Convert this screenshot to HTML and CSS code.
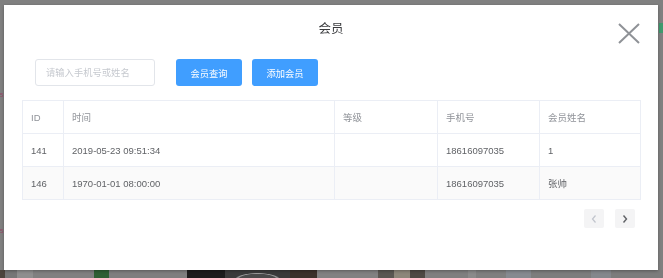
FILE: index.html
```html
<!DOCTYPE html>
<html>
<head>
    <title>会员</title>
    <link rel="stylesheet" href="styles.css">
</head>
<body>
    <div class="page">
        <div class="page-top"></div>
        <div class="page-mid">
            <span class="mark mark-a">5</span>
            <span class="mark mark-b">5</span>
            <span class="tag"></span>
        </div>
        <div class="thumbs">
            <span class="t" style="width:5px;background:#4c443c"></span>
            <span class="t" style="width:12px;background:#767676"></span>
            <span class="t" style="width:16px;background:#8e8e8e"></span>
            <span class="t" style="width:57px;background:#808080"></span>
            <span class="t bottle" style="width:23px"></span>
            <span class="t" style="width:74px;background:#7e7e7e"></span>
            <span class="t" style="width:38px;background:#1c1c1c"></span>
            <span class="t plate" style="width:65px"></span>
            <span class="t" style="width:27px;background:#3b312a"></span>
            <span class="t" style="width:61px;background:#818181"></span>
            <span class="t" style="width:16px;background:#5a5752"></span>
            <span class="t" style="width:16px;background:#8c8679"></span>
            <span class="t" style="width:15px;background:#4d4943"></span>
            <span class="t" style="width:43px;background:#7f7f7f"></span>
            <span class="t" style="width:8px;background:#8a8a8a"></span>
            <span class="t" style="width:30px;background:#7f7f7f"></span>
            <span class="t" style="width:25px;background:#868a90"></span>
            <span class="t" style="width:60px;background:#7d7d7d"></span>
            <span class="t" style="width:20px;background:#84878c"></span>
            <span class="t" style="flex:1;background:#7c7c7c"></span>
        </div>
    </div>

    <div class="dialog">
        <div class="dialog-header">
            <span class="dialog-title">会员</span>
            <button class="dialog-close" aria-label="关闭">
                <svg width="22" height="21" viewBox="0 0 22 21">
                    <path d="M1 1 L21 20 M21 1 L1 20" stroke="#8f9297" stroke-width="2" fill="none"/>
                </svg>
            </button>
        </div>
        <div class="dialog-body">
            <div class="toolbar">
                <input class="search" type="text" placeholder="请输入手机号或姓名">
                <button class="btn btn-search">会员查询</button>
                <button class="btn">添加会员</button>
            </div>
            <table class="members">
                <colgroup>
                    <col style="width:41px">
                    <col style="width:271px">
                    <col style="width:103px">
                    <col style="width:102px">
                    <col>
                </colgroup>
                <thead>
                    <tr>
                        <th>ID</th>
                        <th>时间</th>
                        <th>等级</th>
                        <th>手机号</th>
                        <th>会员姓名</th>
                    </tr>
                </thead>
                <tbody>
                    <tr>
                        <td>141</td>
                        <td>2019-05-23 09:51:34</td>
                        <td></td>
                        <td>18616097035</td>
                        <td>1</td>
                    </tr>
                    <tr class="striped">
                        <td>146</td>
                        <td>1970-01-01 08:00:00</td>
                        <td></td>
                        <td>18616097035</td>
                        <td>张帅</td>
                    </tr>
                </tbody>
            </table>
            <div class="pager">
                <button class="pager-btn disabled" aria-label="上一页">
                    <svg width="6" height="8" viewBox="0 0 6 8"><path d="M4.5 0.5 L1.5 4 L4.5 7.5" stroke="#c0c4cc" stroke-width="1.2" fill="none"/></svg>
                </button>
                <button class="pager-btn" aria-label="下一页">
                    <svg width="6" height="8" viewBox="0 0 6 8"><path d="M1.5 0.5 L4.5 4 L1.5 7.5" stroke="#606266" stroke-width="1.4" fill="none"/></svg>
                </button>
            </div>
        </div>
    </div>
</body>
</html>
```

FILE: styles.css
```css
* { box-sizing: border-box; }
body { margin: 0; background: #808080; font-family: "Liberation Sans", "Noto Sans CJK SC", sans-serif; overflow: hidden; }

.page { height: 278px; display: flex; flex-direction: column; }
.page-top { height: 5px; }
.page-mid { flex: 1; position: relative; }
.mark { position: absolute; left: 0; font-size: 6px; line-height: 7px; color: #9a4466; }
.mark-a { top: 87px; }
.mark-b { top: 223px; }
.tag { position: absolute; right: 0; top: 18px; width: 4px; height: 10px; background: #3f9a6e; }
.thumbs { height: 8px; display: flex; }
.t { display: block; height: 100%; }
.bottle { background: linear-gradient(to right, #7e7e7e 0 4px, #2f5f33 4px 19px, #7e7e7e 19px); }
.plate { background: radial-gradient(ellipse at 50% 120%, #4a4a4a 40%, #9a9a9a 45%, #3a3a3a 50%); }

.dialog { position: fixed; left: 4px; top: 5px; width: 654px; height: 265px; background: #fff; box-shadow: 0 1px 3px rgba(0, 0, 0, .3); }
.dialog-header { height: 45px; display: flex; align-items: center; justify-content: center; position: relative; }
.dialog-title { font-size: 12.5px; color: #3a3b3e; }
.dialog-close { position: absolute; right: 18px; top: 18px; padding: 0; border: 0; background: none; line-height: 0; }

.dialog-body { padding: 0 17px 0 18px; }
.toolbar { display: flex; align-items: center; height: 27px; margin-top: 9px; padding-left: 13px; }
.search { width: 120px; height: 27px; border: 1px solid #e2e5ea; border-radius: 3px; padding: 0 10px; font-family: inherit; font-size: 9.3px; color: #606266; outline: none; }
.search::placeholder { color: #c6c9cf; }
.btn { height: 27px; width: 66px; padding: 0; border: 0; border-radius: 3px; background: #409eff; color: #fff; font-family: inherit; font-size: 9.3px; margin-left: 10px; }
.btn-search { margin-left: 21px; }

.members { width: 619px; margin-top: 14px; border-collapse: collapse; table-layout: fixed; font-size: 9.5px; color: #606266; }
.members th, .members td { height: 33px; padding: 0 8px; text-align: left; font-weight: normal; border: 1px solid #ebeef5; }
.members th { color: #909399; }
.members .striped td { background: #fafafa; }

.pager { display: flex; justify-content: flex-end; gap: 11px; margin-top: 9px; padding-right: 6px; }
.pager-btn { width: 20px; height: 19px; padding: 0; border: 0; border-radius: 2px; background: #f4f4f5; display: flex; align-items: center; justify-content: center; }
```
